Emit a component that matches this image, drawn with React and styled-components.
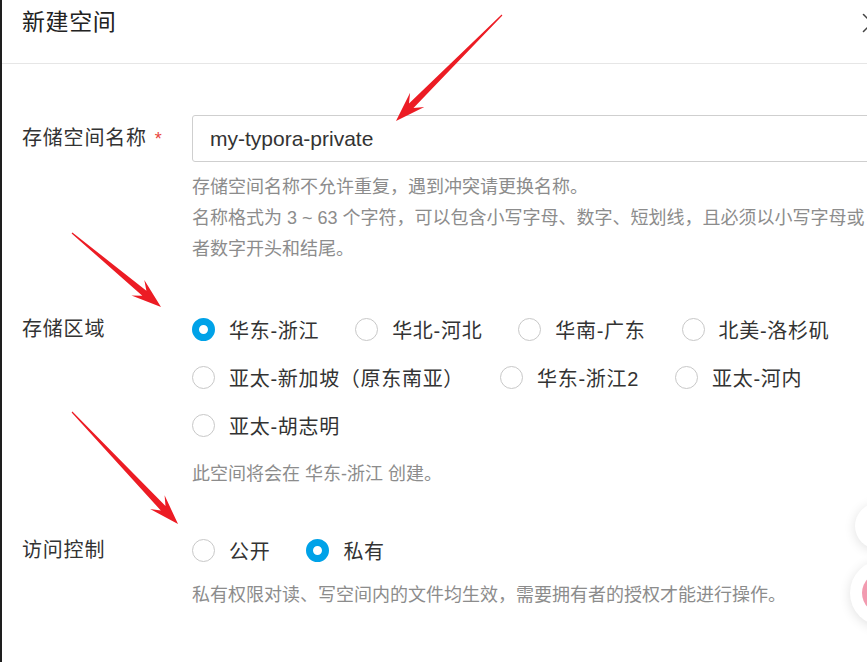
import React from "react";
import styled, { createGlobalStyle } from "styled-components";
import { X } from "lucide-react";

// data
const regions = [
  "华东-浙江",
  "华北-河北",
  "华南-广东",
  "北美-洛杉矶",
  "亚太-新加坡（原东南亚）",
  "华东-浙江2",
  "亚太-河内",
  "亚太-胡志明",
];

const arrows = [
  { x1: 502, y1: 15, x2: 396, y2: 121 },
  { x1: 72, y1: 233, x2: 161, y2: 307 },
  { x1: 72, y1: 412, x2: 178, y2: 524 },
];

// arrow polygon: thin tail, notched head
const arrowPoints = ({ x1, y1, x2, y2 }) => {
  const dx = x2 - x1;
  const dy = y2 - y1;
  const len = Math.hypot(dx, dy);
  const ux = dx / len;
  const uy = dy / len;
  const nx = -uy;
  const ny = ux;
  const hl = 30;
  const hw = 10;
  const bx = x2 - ux * hl;
  const by = y2 - uy * hl;
  const sx = x2 - ux * hl * 0.72;
  const sy = y2 - uy * hl * 0.72;
  const pts = [
    [x1 + nx * 0.6, y1 + ny * 0.6],
    [sx + nx * 3.2, sy + ny * 3.2],
    [bx + nx * hw, by + ny * hw],
    [x2, y2],
    [bx - nx * hw, by - ny * hw],
    [sx - nx * 3.2, sy - ny * 3.2],
    [x1 - nx * 0.6, y1 - ny * 0.6],
  ];
  return pts.map((p) => p.map((v) => v.toFixed(1)).join(",")).join(" ");
};

// main
const App = () => {
  const region = "华东-浙江";
  const access = "私有";

  return (
    <>
      <GlobalStyle />
      <Dialog>
        <Header>
          <Title>新建空间</Title>
          <Close>
            <X size={34} strokeWidth={1.1} />
          </Close>
        </Header>

        <Form>
          <FormItem $mb={40}>
            <Label $center>
              存储空间名称<Required>*</Required>
            </Label>
            <Control>
              <Input defaultValue="my-typora-private" />
              <Help $mt={10}>
                <HelpLine>存储空间名称不允许重复，遇到冲突请更换名称。</HelpLine>
                <HelpLine>
                  名称格式为 3 ~ 63 个字符，可以包含小写字母、数字、短划线，且必须以小写字母或
                </HelpLine>
                <HelpLine>者数字开头和结尾。</HelpLine>
              </Help>
            </Control>
          </FormItem>

          <FormItem $mb={36}>
            <Label>存储区域</Label>
            <Control>
              <RadioGroup>
                {regions.map((r) => (
                  <RadioItem key={r}>
                    <RadioDot $checked={r === region} />
                    <RadioText>{r}</RadioText>
                  </RadioItem>
                ))}
              </RadioGroup>
              <Help $mt={10}>
                <HelpLine>此空间将会在 华东-浙江 创建。</HelpLine>
              </Help>
            </Control>
          </FormItem>

          <FormItem $mb={0}>
            <Label>访问控制</Label>
            <Control>
              <RadioGroup>
                {["公开", "私有"].map((a) => (
                  <RadioItem key={a} $gap={36}>
                    <RadioDot $checked={a === access} />
                    <RadioText>{a}</RadioText>
                  </RadioItem>
                ))}
              </RadioGroup>
              <Help $mt={6}>
                <HelpLine>
                  私有权限对读、写空间内的文件均生效，需要拥有者的授权才能进行操作。
                </HelpLine>
              </Help>
            </Control>
          </FormItem>
        </Form>
      </Dialog>

      <FloatButton $top={503} $size={46} />
      <FloatButton $top={560} $size={66} $left={850}>
        <PinkDot />
      </FloatButton>

      <Annotations width="867" height="662">
        {arrows.map((a, i) => (
          <polygon key={i} points={arrowPoints(a)} fill="#ec1c24" />
        ))}
      </Annotations>
    </>
  );
};

// styled
const GlobalStyle = createGlobalStyle`
  html, body {
    margin: 0;
    padding: 0;
    background: #fff;
    overflow: hidden;
  }
  body {
    font-family: "Liberation Sans", "Noto Sans CJK SC", sans-serif;
    color: #333;
  }
`;

const Dialog = styled.div`
  width: 898px;
  height: 662px;
  border-left: 2px solid #1e1e1e;
  background: #fff;
`;

const Header = styled.div`
  display: flex;
  justify-content: space-between;
  align-items: flex-start;
  height: 64px;
  padding: 7px 11px 0 20px;
  box-sizing: border-box;
  border-bottom: 1px solid #e6e6e6;
`;

const Title = styled.div`
  font-size: 23px;
  line-height: 30px;
  color: #222;
  letter-spacing: 0.6px;
`;

const Close = styled.div`
  display: flex;
  align-items: center;
  height: 34px;
  margin-top: -1px;
  color: #444;
`;

const Form = styled.div`
  padding: 51px 0 0 20px;
`;

const FormItem = styled.div`
  display: grid;
  grid-template-columns: 170px 1fr;
  margin-bottom: ${(p) => p.$mb}px;
`;

const Label = styled.div`
  font-size: 20px;
  line-height: ${(p) => (p.$center ? "46px" : "48px")};
  color: #333;
  letter-spacing: 0.8px;
  white-space: nowrap;
`;

const Required = styled.span`
  color: #e8463d;
  margin-left: 8px;
  font-size: 18px;
`;

const Control = styled.div`
  min-width: 0;
`;

const Input = styled.input`
  display: block;
  width: 100%;
  height: 47px;
  box-sizing: border-box;
  border: 1px solid #cfcfcf;
  border-radius: 3px;
  padding: 0 17px;
  font-family: "Liberation Sans", "Noto Sans CJK SC", sans-serif;
  font-size: 21px;
  color: #333;
  outline: none;
`;

const Help = styled.div`
  margin-top: ${(p) => p.$mt}px;
  font-size: 18px;
  line-height: 31px;
  color: #8c8c8c;
`;

const HelpLine = styled.div`
  white-space: nowrap;
`;

const RadioGroup = styled.div`
  display: flex;
  flex-wrap: wrap;
  max-width: 740px;
`;

const RadioItem = styled.label`
  display: flex;
  align-items: center;
  height: 48px;
  margin-right: ${(p) => p.$gap ?? 36}px;
  cursor: pointer;
`;

const RadioDot = styled.span`
  width: 23px;
  height: 23px;
  box-sizing: border-box;
  border-radius: 50%;
  border: ${(p) => (p.$checked ? "7.5px solid #00a2e8" : "1px solid #c8c8c8")};
  background: #fff;
  margin-right: 14px;
  flex-shrink: 0;
`;

const RadioText = styled.span`
  font-size: 20px;
  color: #333;
  letter-spacing: 0.7px;
  white-space: nowrap;
`;

const FloatButton = styled.div`
  position: fixed;
  top: ${(p) => p.$top}px;
  left: ${(p) => p.$left ?? 855}px;
  width: ${(p) => p.$size}px;
  height: ${(p) => p.$size}px;
  border-radius: 50%;
  background: #fff;
  box-shadow: 0 2px 12px rgba(0, 0, 0, 0.12);
  display: flex;
  align-items: center;
  justify-content: center;
`;

const PinkDot = styled.div`
  width: 42px;
  height: 42px;
  border-radius: 50%;
  background: #f29bb0;
`;

const Annotations = styled.svg`
  position: fixed;
  left: 0;
  top: 0;
  pointer-events: none;
`;

export default App;
